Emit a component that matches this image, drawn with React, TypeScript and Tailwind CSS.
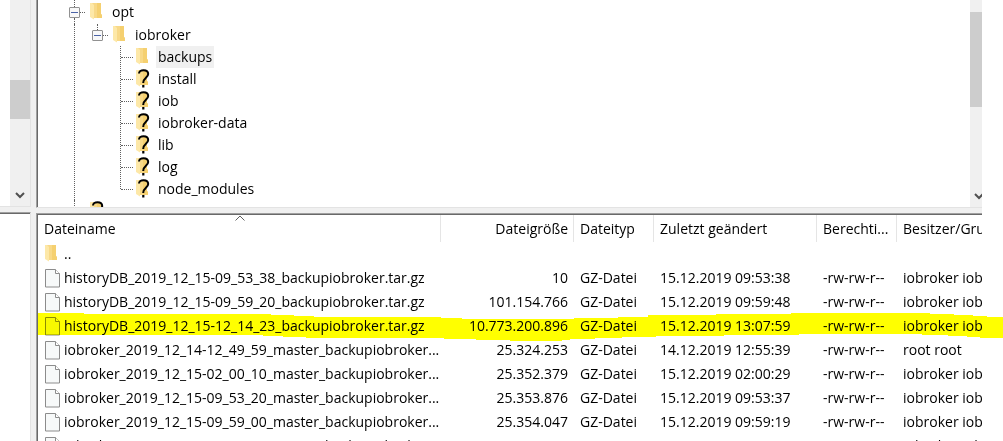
import { useState } from 'react'

interface FileRow {
  name: string
  size: string
  changed: string
  owner: string
}

const FOLDERS = ['backups', 'install', 'iob', 'iobroker-data', 'lib', 'log', 'node_modules']

const FILES: FileRow[] = [
  { name: 'historyDB_2019_12_15-09_53_38_backupiobroker.tar.gz', size: '10', changed: '15.12.2019 09:53:38', owner: 'iobroker iob' },
  { name: 'historyDB_2019_12_15-09_59_20_backupiobroker.tar.gz', size: '101.154.766', changed: '15.12.2019 09:59:48', owner: 'iobroker iob' },
  { name: 'historyDB_2019_12_15-12_14_23_backupiobroker.tar.gz', size: '10.773.200.896', changed: '15.12.2019 13:07:59', owner: 'iobroker iob' },
  { name: 'iobroker_2019_12_14-12_49_59_master_backupiobroker...', size: '25.324.253', changed: '14.12.2019 12:55:39', owner: 'root root' },
  { name: 'iobroker_2019_12_15-02_00_10_master_backupiobroker...', size: '25.352.379', changed: '15.12.2019 02:00:29', owner: 'iobroker iob' },
  { name: 'iobroker_2019_12_15-09_53_20_master_backupiobroker...', size: '25.353.876', changed: '15.12.2019 09:53:37', owner: 'iobroker iob' },
  { name: 'iobroker_2019_12_15-09_59_00_master_backupiobroker...', size: '25.354.047', changed: '15.12.2019 09:59:19', owner: 'iobroker iob' },
  { name: 'iobroker_2019_12_15-12_14_05_master_backupiobroker...', size: '25.379.396', changed: '15.12.2019 12:14:23', owner: 'iobroker iob' },
]

function FolderIcon({ unknown }: { unknown?: boolean }) {
  return (
    <svg width="16" height="20" viewBox="0 0 16 20" className="shrink-0" aria-hidden="true">
      <path d="M2 1h9v11l1 1v3H2z" fill="#f8d988" />
      <path d="M7 1h4v11l1 1v3H7z" fill="#f5d070" />
      <path d="M0 1h2l2 2v14.500l-4-2.500z" fill="#fde8a8" />
      {unknown && (
        <>
          <path
            d="M3 4.500C3 2.500 5 1.200 7.500 1.200S12.200 2.500 12.200 5C12.200 8.500 7.200 8.500 7.200 14"
            fill="none"
            stroke="#000"
            strokeWidth="2"
          />
          <path d="M6.200 16h2.200v2.500H6.200z" />
        </>
      )}
    </svg>
  )
}

function FileIcon() {
  return (
    <svg width="15" height="19" viewBox="0 0 15 19" className="shrink-0" aria-hidden="true">
      <path d="M.5.5h10l4 4v13.500H.5z" fill="#f7f9f9" stroke="#8c8c8c" />
      <path d="M10.500.5v4h4" fill="#fff" stroke="#8c8c8c" />
    </svg>
  )
}

function Chevron() {
  return (
    <svg width="10" height="7" viewBox="0 0 10 7" className="shrink-0" aria-hidden="true">
      <path d="M1 1l4 4 4-4" fill="none" stroke="#505050" strokeWidth="2" />
    </svg>
  )
}

interface ToggleProps {
  label: string
  open: boolean
  continues?: boolean
  onClick: () => void
}

function Toggle({ label, open, continues, onClick }: ToggleProps) {
  return (
    <span className="flex h-full w-[11px] shrink-0 flex-col items-center">
      <span className="w-px flex-1 border-l border-dotted border-[#606060]" />
      <button
        type="button"
        aria-label={label}
        aria-expanded={open}
        onClick={onClick}
        className="flex size-[11px] shrink-0 items-center justify-center rounded-[1px] border border-[#919191] bg-[#f8f8f8]"
      >
        <svg width="7" height="7" viewBox="0 0 7 7" aria-hidden="true">
          <path d={open ? 'M0 3.500h7' : 'M0 3.500h7M3.500 0v7'} stroke="#4b63a7" />
        </svg>
      </button>
      <span className={`w-px flex-1 ${continues ? 'border-l border-dotted border-[#606060]' : ''}`} />
    </span>
  )
}

function Branch() {
  return <span className="mr-[5px] w-[5px] shrink-0 border-t border-dotted border-[#606060]" />
}

function FolderTree() {
  const [optOpen, setOptOpen] = useState(true)
  const [brokerOpen, setBrokerOpen] = useState(true)
  const [selected, setSelected] = useState('backups')

  return (
    <div className="min-w-0 flex-1 overflow-hidden pl-[31px]">
      <ul>
        <li>
          <div className="flex h-6 items-center">
            <Toggle label="opt" open={optOpen} continues onClick={() => setOptOpen(!optOpen)} />
            <Branch />
            <span className="flex w-[22px]">
              <FolderIcon />
            </span>
            <span>opt</span>
          </div>
          {optOpen && (
            <ul className="ml-[5px] border-l border-dotted border-[#606060] pl-[17px]">
              <li>
                <div className="flex h-[22px] items-center">
                  <Toggle label="iobroker" open={brokerOpen} onClick={() => setBrokerOpen(!brokerOpen)} />
                  <Branch />
                  <span className="flex w-[22px]">
                    <FolderIcon />
                  </span>
                  <span>iobroker</span>
                </div>
                {brokerOpen && (
                  <ul className="ml-7 flex">
                    <li className="mb-[11px] w-px border-l border-dotted border-[#606060]" />
                    <li>
                      <ul>
                        {FOLDERS.map((folder) => (
                          <li key={folder} className="flex h-[22px] items-center">
                            <span className="mr-[3px] w-3 border-t border-dotted border-[#606060]" />
                            <FolderIcon unknown={folder !== 'backups'} />
                            <button
                              type="button"
                              onClick={() => setSelected(folder)}
                              className={`ml-1 px-[2px] leading-[22px] ${selected === folder ? 'bg-[#f0f0f0]' : ''}`}
                            >
                              {folder}
                            </button>
                          </li>
                        ))}
                      </ul>
                    </li>
                  </ul>
                )}
              </li>
            </ul>
          )}
        </li>
        <li className="ml-[5px] flex h-[22px] items-center border-l border-dotted border-[#606060] pl-[15px]">
          <FolderIcon unknown />
        </li>
      </ul>
    </div>
  )
}

const HEAD_CELL = 'border-r border-[#e5e5e5] p-0 pl-[6px] text-left font-normal'

function FileTable() {
  return (
    <div className="overflow-hidden">
      <table className="w-full table-fixed border-separate border-spacing-0 whitespace-nowrap">
        <colgroup>
          <col className="w-[403px]" />
          <col className="w-[133px]" />
          <col className="w-20" />
          <col className="w-[163px]" />
          <col className="w-20" />
          <col />
        </colgroup>
        <thead>
          <tr className="h-[27px]">
            <th className={HEAD_CELL} aria-sort="ascending">
              <button type="button" className="relative block w-full text-left">
                Dateiname
                <svg width="10" height="6" viewBox="0 0 10 6" className="absolute -top-1 left-[191px]" aria-hidden="true">
                  <path d="M.5 5.500L5 1l4.500 4.500" fill="none" stroke="#606060" />
                </svg>
              </button>
            </th>
            <th className="border-r border-[#e5e5e5] p-0 pr-[5px] text-right font-normal">
              <button type="button">Dateigröße</button>
            </th>
            <th className={HEAD_CELL}>
              <button type="button">Dateityp</button>
            </th>
            <th className={HEAD_CELL}>
              <button type="button">Zuletzt geändert</button>
            </th>
            <th className={HEAD_CELL}>
              <button type="button">Berechti...</button>
            </th>
            <th className="overflow-hidden p-0 pl-[6px] text-left font-normal">
              <button type="button">Besitzer/Gru</button>
            </th>
          </tr>
        </thead>
        <tbody>
          <tr className="h-6">
            <td className="p-0 pl-[7px]" colSpan={6}>
              <div className="flex h-6 items-center">
                <span className="flex w-[19px]">
                  <FolderIcon />
                </span>
                ..
              </div>
            </td>
          </tr>
          {FILES.map((file) => (
            <tr key={file.name} className="h-6">
              <td className="p-0 pl-[7px]">
                <div className="flex h-6 items-center">
                  <span className="flex w-[19px]">
                    <FileIcon />
                  </span>
                  {file.name}
                </div>
              </td>
              <td className="p-0 pr-[6px] text-right">{file.size}</td>
              <td className="p-0 pl-[6px]">GZ-Datei</td>
              <td className="p-0 pl-[6px]">{file.changed}</td>
              <td className="p-0 pl-[6px]">-rw-rw-r--</td>
              <td className="overflow-hidden p-0 pl-[6px]">{file.owner}</td>
            </tr>
          ))}
        </tbody>
      </table>
    </div>
  )
}

export default function App() {
  return (
    <div className="flex h-screen overflow-hidden bg-white pr-[21px] font-['Open_Sans','Noto_Sans',sans-serif] text-sm text-black">
      {/* local side, only its edge is visible */}
      <div className="flex w-9 shrink-0 flex-col bg-[#f0f0f0] pr-[5px]">
        <div className="flex h-[207px] shrink-0 border-r border-b border-[#e3e3e3] bg-white">
          <div className="flex-1" />
          <div className="flex w-5 flex-col items-center justify-between bg-[#f0f0f0] pt-20 pb-[7px]">
            <div className="h-[39px] w-full bg-[#cdcdcd]" />
            <Chevron />
          </div>
        </div>
        <div className="mt-[5px] flex-1 border-t border-r border-t-[#a0a0a0] border-r-[#e3e3e3] bg-[#696969] pt-px">
          <div className="h-full bg-white" />
        </div>
      </div>

      {/* server side */}
      <div className="flex min-w-0 flex-1 flex-col bg-[#f0f0f0]">
        <div className="flex h-52 shrink-0 border-b border-l border-b-[#e3e3e3] border-l-[#a0a0a0]">
          <div className="flex min-w-0 flex-1 border-l border-[#696969] bg-white">
            <FolderTree />
            <div className="flex w-3 flex-col justify-between overflow-hidden bg-[#f0f0f0] pt-3 pb-[7px]">
              <div className="h-[95px] w-full bg-[#cdcdcd]" />
              <span className="ml-1 flex">
                <Chevron />
              </span>
            </div>
          </div>
        </div>
        <div className="relative mt-[5px] flex-1 border-t border-l border-[#a0a0a0]">
          <div className="h-full border-t border-l border-[#696969] bg-white">
            <FileTable />
          </div>
          {/* marker stroke across the third backup */}
          <svg
            viewBox="38 312 965 30"
            preserveAspectRatio="none"
            className="pointer-events-none absolute top-[98px] -right-[21px] left-px h-[30px] w-[calc(100%+20px)] mix-blend-multiply"
            aria-hidden="true"
          >
            <path
              d="M38 313H84V314H271V315H294V316H314V317H441V318H462V319H574V318H618V317H648V315H716V314H791V313H930V314H954V315H973V316H987V317H1003V338H980V337H967V336H948V335H922V334H799V335H724V336H656V337H622V338H595V339H570V340H562V341H510V340H476V339H444V338H306V337H283V336H263V335H38Z"
              fill="#ff0"
            />
          </svg>
        </div>
      </div>
    </div>
  )
}
